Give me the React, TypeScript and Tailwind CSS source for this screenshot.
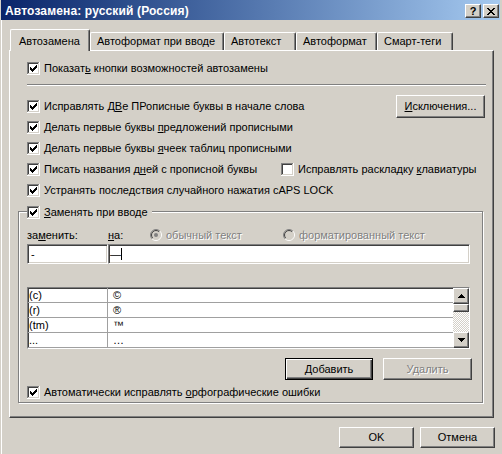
import React from "react";

const raised =
  "border border-t-white border-l-white border-r-[#404040] border-b-[#404040] shadow-[inset_-1px_-1px_0_#808080]";
const sunken =
  "border border-t-[#808080] border-l-[#808080] border-r-white border-b-white shadow-[inset_1px_1px_0_#404040,inset_-1px_-1px_0_#d4d0c8]";
const disabledText = "text-[#808080] [text-shadow:1px_1px_0_#fff]";

function CheckBox({ checked = true }: { checked?: boolean }) {
  const starts = [5, 6, 7, 6, 5, 4, 3];
  return (
    <svg width="13" height="13" viewBox="0 0 13 13" shapeRendering="crispEdges" className="shrink-0 block">
      <rect x="0" y="0" width="13" height="13" fill="#fff" />
      <rect x="0" y="0" width="12" height="1" fill="#808080" />
      <rect x="0" y="0" width="1" height="12" fill="#808080" />
      <rect x="0" y="12" width="13" height="1" fill="#fff" />
      <rect x="12" y="0" width="1" height="13" fill="#fff" />
      <rect x="1" y="1" width="10" height="1" fill="#404040" />
      <rect x="1" y="1" width="1" height="10" fill="#404040" />
      <rect x="1" y="11" width="11" height="1" fill="#d4d0c8" />
      <rect x="11" y="1" width="1" height="11" fill="#d4d0c8" />
      {checked &&
        starts.map((s, i) => <rect key={i} x={3 + i} y={s} width="1" height="3" fill="#000" />)}
    </svg>
  );
}

function Radio({ selected }: { selected?: boolean }) {
  const arc = (r: number, tl: boolean) => {
    const d = r * Math.SQRT1_2;
    const bl = `${6 - d} ${6 + d}`;
    const tr = `${6 + d} ${6 - d}`;
    return tl ? `M${bl} A${r} ${r} 0 0 1 ${tr}` : `M${tr} A${r} ${r} 0 0 1 ${bl}`;
  };
  return (
    <svg width="12" height="12" viewBox="0 0 12 12" className="shrink-0 block">
      <circle cx="6" cy="6" r="4" fill="#d4d0c8" />
      <path d={arc(5.5, true)} stroke="#808080" fill="none" />
      <path d={arc(5.5, false)} stroke="#fff" fill="none" />
      <path d={arc(4.5, true)} stroke="#404040" fill="none" />
      <path d={arc(4.5, false)} stroke="#d4d0c8" fill="none" />
      {selected && <circle cx="6" cy="6" r="2" fill="#808080" />}
    </svg>
  );
}

function CloseGlyph() {
  const rows: [number, number][][] = [
    [[0, 2], [6, 2]],
    [[1, 2], [5, 2]],
    [[2, 4]],
    [[3, 2]],
    [[2, 4]],
    [[1, 2], [5, 2]],
    [[0, 2], [6, 2]],
  ];
  return (
    <svg width="8" height="7" viewBox="0 0 8 7" shapeRendering="crispEdges" className="block">
      {rows.map((segs, y) =>
        segs.map(([x, w], k) => <rect key={`${y}-${k}`} x={x} y={y} width={w} height="1" fill="#000" />)
      )}
    </svg>
  );
}

function Arrow({ up }: { up?: boolean }) {
  return (
    <svg width="7" height="4" viewBox="0 0 7 4" shapeRendering="crispEdges" className="block">
      {up ? (
        <>
          <rect x="3" y="0" width="1" height="1" fill="#000" />
          <rect x="2" y="1" width="3" height="1" fill="#000" />
          <rect x="1" y="2" width="5" height="1" fill="#000" />
          <rect x="0" y="3" width="7" height="1" fill="#000" />
        </>
      ) : (
        <>
          <rect x="0" y="0" width="7" height="1" fill="#000" />
          <rect x="1" y="1" width="5" height="1" fill="#000" />
          <rect x="2" y="2" width="3" height="1" fill="#000" />
          <rect x="3" y="3" width="1" height="1" fill="#000" />
        </>
      )}
    </svg>
  );
}

function CheckRow({ children, checked = true }: { children: React.ReactNode; checked?: boolean }) {
  return (
    <div className="flex items-center gap-[4px] whitespace-nowrap">
      <CheckBox checked={checked} />
      <span>{children}</span>
    </div>
  );
}

const rows: [string, string][] = [
  ["(c)", "©"],
  ["(r)", "®"],
  ["(tm)", "™"],
  ["...", "…"],
];

export default function App() {
  return (
    <div className="w-[502px] h-[454px] bg-[#d4d0c8] text-black text-[11px] leading-[13px] font-['Liberation_Sans',Arial,sans-serif] overflow-hidden flex flex-col border-r border-r-[#d4d0c8]">
      {/* Title bar */}
      <div className="h-[20px] mx-[1px] flex items-start bg-linear-to-r from-[#0a246a] to-[#a6caf0]">
        <span className="ml-[4px] mt-[4px] text-white font-bold text-[12px] leading-[14px] tracking-[0.15px] whitespace-nowrap">
          Автозамена: русский (Россия)
        </span>
        <div className="ml-auto mr-[1px] mt-[4px] flex gap-[2px]">
          <div className={`w-[16px] h-[14px] bg-[#d4d0c8] flex items-center justify-center font-bold text-[11px] leading-[11px] ${raised}`}>
            ?
          </div>
          <div className={`w-[16px] h-[14px] bg-[#d4d0c8] flex items-center justify-center ${raised}`}>
            <CloseGlyph />
          </div>
        </div>
      </div>

      <div className="flex-1 flex flex-col border-l border-l-white ml-[1px]">
        {/* Tabs */}
        <div className="mt-[9px] ml-[8px] h-[21px] flex items-end">
          <div className="relative z-10 w-[80px] h-[22px] -mb-[1px] bg-[#d4d0c8] border-l border-t border-l-white border-t-white border-r border-r-[#404040] shadow-[inset_-1px_0_0_#808080] rounded-t-[2px] pt-[5px] pl-[8px] whitespace-nowrap">
            Автозамена
          </div>
          <div className="w-[134px] h-[18px] border-l border-t border-l-white border-t-white border-r border-r-[#404040] shadow-[inset_-1px_0_0_#808080] rounded-t-[2px] pt-[2px] pl-[6px] whitespace-nowrap">
            Автоформат при вводе
          </div>
          <div className="w-[72px] h-[18px] border-l border-t border-l-white border-t-white border-r border-r-[#404040] shadow-[inset_-1px_0_0_#808080] rounded-t-[2px] pt-[2px] pl-[6px] whitespace-nowrap">
            Автотекст
          </div>
          <div className="w-[81px] h-[18px] border-l border-t border-l-white border-t-white border-r border-r-[#404040] shadow-[inset_-1px_0_0_#808080] rounded-t-[2px] pt-[2px] pl-[6px] whitespace-nowrap">
            Автоформат
          </div>
          <div className="w-[76px] h-[18px] border-l border-t border-l-white border-t-white border-r border-r-[#404040] shadow-[inset_-1px_0_0_#808080] rounded-t-[2px] pt-[2px] pl-[6px] whitespace-nowrap">
            Смарт-теги
          </div>
        </div>

        {/* Tab panel */}
        <div className={`ml-[7px] w-[485px] h-[368px] flex flex-col ${raised}`}>
          <div className="pl-[17px] pt-[7px] flex flex-col">
            <div className="h-[21px] flex items-center">
              <CheckRow>
                Показат<u>ь</u> кнопки возможностей автозамены
              </CheckRow>
            </div>
            <div className="mt-[5px] w-[459px] h-[2px] border-t border-t-[#808080] border-b border-b-white" />
            <div className="mt-[10px] h-[21px] flex items-center">
              <CheckRow>
                Исправлять Д<u>В</u>е ПРописные буквы в начале слова
              </CheckRow>
              <div className={`ml-auto mr-[8px] w-[89px] h-[23px] flex items-center justify-center whitespace-nowrap ${raised}`}>
                <span>
                  <u>И</u>сключения...
                </span>
              </div>
            </div>
            <div className="h-[21px] flex items-center">
              <CheckRow>
                Делать первые буквы <u>п</u>редложений прописными
              </CheckRow>
            </div>
            <div className="h-[21px] flex items-center">
              <CheckRow>
                Делать первые буквы <u>я</u>чеек таблиц прописными
              </CheckRow>
            </div>
            <div className="h-[21px] flex items-center">
              <div className="w-[254px]">
                <CheckRow>
                  Писать названия д<u>н</u>ей с прописной буквы
                </CheckRow>
              </div>
              <CheckRow checked={false}>
                Исправлять раскладку <u>к</u>лавиатуры
              </CheckRow>
            </div>
            <div className="h-[21px] flex items-center">
              <CheckRow>
                Устранять после<u>д</u>ствия случайного нажатия cAPS LOCK
              </CheckRow>
            </div>
          </div>

          {/* Group box */}
          <div className="mt-[10px] ml-[8px] w-[465px] border border-[#808080] shadow-[inset_1px_1px_0_#fff,1px_1px_0_#fff] pl-[8px] pb-[3px] flex flex-col">
            <div className="-mt-[7px] h-[14px] w-fit bg-[#d4d0c8] pr-[4px] flex items-center gap-[4px] whitespace-nowrap">
              <CheckBox />
              <span>
                <u>З</u>аменять при вводе
              </span>
            </div>
            <div className="mt-[9px] h-[14px] flex items-center whitespace-nowrap">
              <span className="w-[81px]">
                за<u>м</u>енить:
              </span>
              <span className="w-[42px]">
                <u>н</u>а:
              </span>
              <div className="w-[133px] flex items-center gap-[4px]">
                <Radio selected />
                <span className={disabledText}>обычный текст</span>
              </div>
              <div className="flex items-center gap-[4px]">
                <Radio />
                <span className={disabledText}>форматированный текст</span>
              </div>
            </div>
            <div className="mt-[2px] flex">
              <div className={`w-[81px] h-[20px] bg-white pl-[3px] flex items-center ${sunken}`}>-</div>
              <div className={`w-[362px] h-[20px] bg-white pl-[1px] flex items-center ${sunken}`}>
                <span>—</span>
                <span className="w-[1px] h-[12px] bg-black" />
              </div>
            </div>

            {/* List */}
            <div className={`mt-[23px] w-[443px] h-[62px] bg-white flex overflow-hidden ${sunken}`}>
              <div className="flex-1 flex flex-col overflow-hidden">
                {rows.map(([a, b]) => (
                  <div key={a} className="h-[15px] shrink-0 flex border-b border-b-[#a0a0a0]">
                    <div className="w-[80px] border-r border-r-[#a0a0a0] pl-[1px] leading-[14px]">{a}</div>
                    <div className="pl-[5px] leading-[14px]">{b}</div>
                  </div>
                ))}
              </div>
              <div className="w-[16px] flex flex-col">
                <div className={`h-[16px] bg-[#d4d0c8] flex items-center justify-center ${raised}`}>
                  <Arrow up />
                </div>
                <div className={`h-[8px] bg-[#d4d0c8] ${raised}`} />
                <div className="flex-1 bg-[repeating-conic-gradient(#ffffff_0%_25%,#d4d0c8_0%_50%)] bg-[length:2px_2px]" />
                <div className={`h-[16px] bg-[#d4d0c8] flex items-center justify-center ${raised}`}>
                  <Arrow />
                </div>
              </div>
            </div>

            {/* Buttons */}
            <div className="mt-[9px] flex">
              <div className="ml-[258px] w-[88px] h-[22px] border border-black shadow-[inset_1px_1px_0_#fff,inset_-1px_-1px_0_#404040,inset_-2px_-2px_0_#808080] flex items-center justify-center">
                <span>
                  <u>Д</u>обавить
                </span>
              </div>
              <div className={`ml-[10px] w-[89px] h-[22px] flex items-center justify-center ${raised}`}>
                <span className={disabledText}>Удалить</span>
              </div>
            </div>

            <div className="mt-[5px] h-[14px] flex items-center">
              <CheckRow>
                Автоматически исправлять <u>о</u>рфографические ошибки
              </CheckRow>
            </div>
          </div>
        </div>

        {/* OK / Cancel */}
        <div className="mt-[9px] ml-[337px] flex gap-[6px]">
          <div className={`w-[75px] h-[21px] flex items-center justify-center ${raised}`}>OK</div>
          <div className={`w-[75px] h-[21px] flex items-center justify-center ${raised}`}>Отмена</div>
        </div>
      </div>
    </div>
  );
}
